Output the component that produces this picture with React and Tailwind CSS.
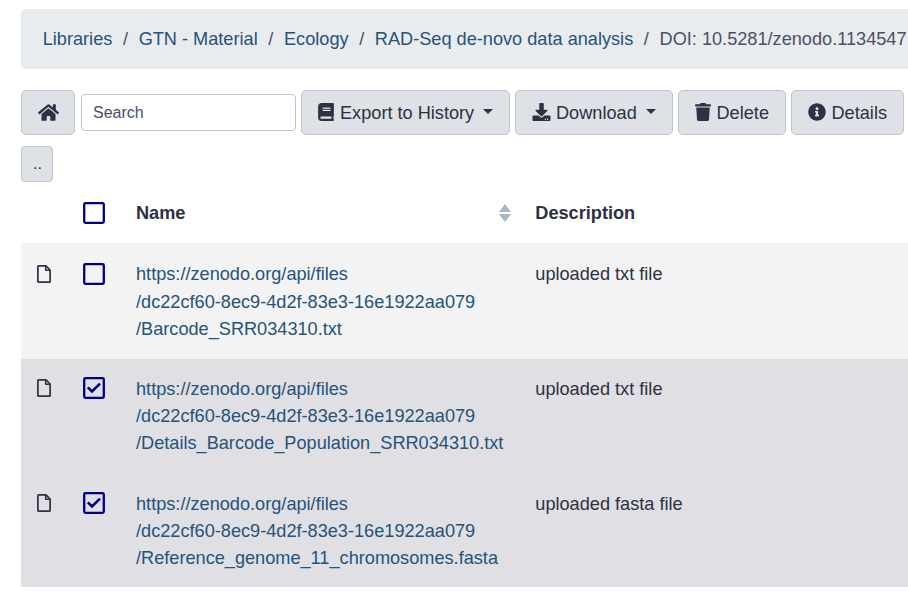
import React from "react";
import { FaHome, FaBook, FaDownload, FaTrash, FaInfoCircle } from "react-icons/fa";

const crumbs = ["Libraries", "GTN - Material", "Ecology", "RAD-Seq de-novo data analysis"];

const rows = [
  { file: "/Barcode_SRR034310.txt", desc: "uploaded txt file", checked: false },
  { file: "/Details_Barcode_Population_SRR034310.txt", desc: "uploaded txt file", checked: true },
  { file: "/Reference_genome_11_chromosomes.fasta", desc: "uploaded fasta file", checked: true },
];

function Checkbox({ checked }) {
  return (
    <svg width="22" height="22" viewBox="0 0 22 22" fill="none" stroke="#00008b" className="block">
      <rect x="1.2" y="1.2" width="19.6" height="19.6" rx="1.2" strokeWidth="2.3" />
      {checked && <path d="M4.8 10.4 L9 14.4 L17 6.6" strokeWidth="2.6" />}
    </svg>
  );
}

function FileIcon({ className }) {
  return (
    <svg
      width="14"
      height="18"
      viewBox="0 0 14 18"
      fill="none"
      stroke="#2c3143"
      strokeWidth="1.7"
      strokeLinejoin="round"
      className={className}
    >
      <path d="M1.7 0.9H9L13.1 5V16.4Q13.1 17.1 12.4 17.1H1.7Q0.9 17.1 0.9 16.4V1.7Q0.9 0.9 1.7 0.9Z" />
      <path d="M8.7 1V5.3H13" strokeWidth="1.5" />
    </svg>
  );
}

function Caret() {
  return (
    <svg width="10" height="5" viewBox="0 0 10 5" className="mb-[3px] ml-[9px]">
      <path d="M0 0H10L5 5Z" fill="#2c3143" />
    </svg>
  );
}

function Button({ className, children }) {
  return (
    <button
      className={
        "flex h-[45px] shrink-0 items-center rounded-[5px] border border-[#bdc6d0] bg-[#dee2e6] pl-4 whitespace-nowrap " +
        className
      }
    >
      {children}
    </button>
  );
}

export default function App() {
  return (
    <div className="h-[605px] w-[908px] overflow-hidden bg-white pt-[9px] pl-[21px] font-['Liberation_Sans',Arial,sans-serif] text-[18.16px] leading-[27.2px] text-[#2c3143]">
      <nav className="flex h-[60px] items-center rounded-l-[5px] bg-[#e9ecef] pt-[2px] pl-[21.7px] whitespace-nowrap">
        {crumbs.map((c) => (
          <React.Fragment key={c}>
            <a className="text-[#25537b]">{c}</a>
            <span className="w-[26.3px] text-center text-[#495069]">/</span>
          </React.Fragment>
        ))}
        <span className="text-[#495069]">DOI: 10.5281/zenodo.1134547</span>
      </nav>

      <div className="mt-[21px] flex h-[45px] items-center">
        <Button className="w-[54px]">
          <FaHome className="h-[21px] w-[21px]" />
        </Button>
        <input
          placeholder="Search"
          className="ml-[6px] h-[37px] w-[215px] rounded-[4px] border border-[#bdc6d0] bg-white px-[11px] text-[16px] placeholder:text-[#495069]"
        />
        <Button className="ml-[5px] w-[209px]">
          <FaBook className="mr-[6px] mb-[2px] h-[18px] w-[16px]" />
          <span className="pt-[2px]">Export to History</span>
          <Caret />
        </Button>
        <Button className="ml-[5px] w-[158px]">
          <FaDownload className="mr-[5px] mb-[2px] h-[18px] w-[19px]" />
          <span className="pt-[2px]">Download</span>
          <Caret />
        </Button>
        <Button className="ml-[5px] w-[108px]">
          <FaTrash className="mr-[5.5px] mb-[2px] h-[18px] w-[16px]" />
          <span className="pt-[2px]">Delete</span>
        </Button>
        <Button className="ml-[5px] w-[113px]">
          <FaInfoCircle className="mr-[5.5px] mb-[2px] h-[18px] w-[18px]" />
          <span className="pt-[2px]">Details</span>
        </Button>
      </div>

      <button className="mt-[11px] flex h-[36px] w-[32px] items-center justify-center rounded-[4px] border border-[#bdc6d0] bg-[#dee2e6] pl-px text-[16px]">
        ..
      </button>

      <div className="grid h-[61px] grid-cols-[62px_53px_399.3px_1fr] items-center font-bold">
        <span />
        <Checkbox />
        <div className="flex items-center pt-[2px]">
          <span>Name</span>
          <svg width="12" height="18" viewBox="0 0 12 18" className="mr-[24.3px] ml-auto" fill="#a9b6c4">
            <path d="M6 0L12 8H0ZM0 10H12L6 18Z" />
          </svg>
        </div>
        <span className="pt-[2px]">Description</span>
      </div>

      {rows.map((r, i) => (
        <div
          key={r.file}
          className={
            "grid grid-cols-[62px_53px_399.3px_1fr] items-start " +
            (r.checked ? "bg-[#e0dfe4] " : "bg-[#f3f3f3] ") +
            (i === 0 ? "h-[116px] pt-[18.4px]" : i === 1 ? "h-[115px] pt-[17px]" : "h-[113px] pt-[17px]")
          }
        >
          <FileIcon className={"ml-[16px] " + (i === 0 ? "mt-[3.6px]" : "mt-[3px]")} />
          <div className={i === 0 ? "pt-[1.6px]" : "pt-px"}>
            <Checkbox checked={r.checked} />
          </div>
          <a className="text-[#25537b]">
            https://zenodo.org/api/files
            <br />
            /dc22cf60-8ec9-4d2f-83e3-16e1922aa079
            <br />
            {r.file}
          </a>
          <span>{r.desc}</span>
        </div>
      ))}
    </div>
  );
}
